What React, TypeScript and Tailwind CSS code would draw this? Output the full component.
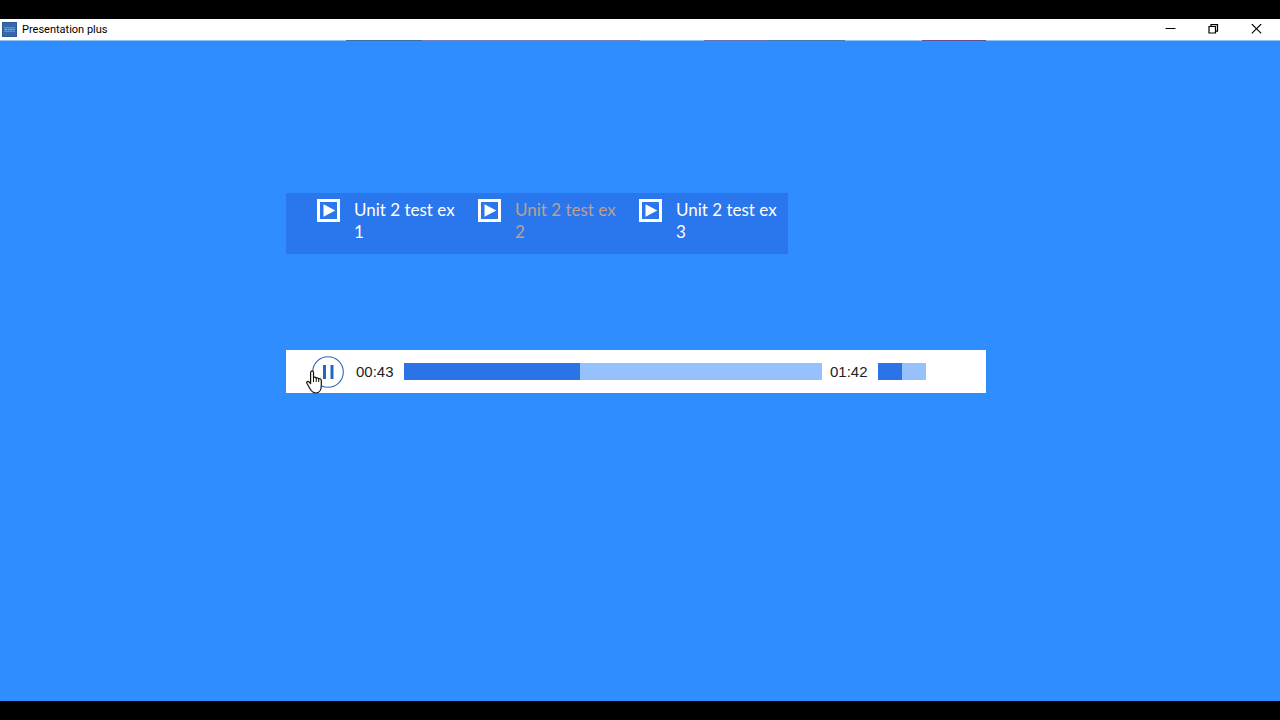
import { useState } from "react";

interface Track {
  id: number;
  name: string;
}

interface BarSliderProps {
  label: string;
  value: number;
  max: number;
  onChange: (value: number) => void;
  className: string;
}

const tracks: Track[] = [
  { id: 1, name: "Unit 2 test ex 1" },
  { id: 2, name: "Unit 2 test ex 2" },
  { id: 3, name: "Unit 2 test ex 3" },
];

const DURATION = 102;

const formatTime = (seconds: number) => {
  const mins = String(Math.floor(seconds / 60)).padStart(2, "0");
  const secs = String(seconds % 60).padStart(2, "0");
  return `${mins}:${secs}`;
};

const TitleBar = () => (
  <header className="flex h-[21px] items-center justify-between bg-white pr-0.5 pl-0.5 text-black">
    <div className="flex items-center gap-[5px]">
      <svg width="15" height="15" viewBox="0 0 15 15" aria-hidden="true">
        <rect width="15" height="15" fill="#3468ab" />
        <rect x="0.5" y="0.5" width="14" height="14" fill="none" stroke="#2c5a9a" />
        <rect x="2" y="5" width="11" height="5" fill="#4179ba" />
        <path d="M2 5.5h11M2 9.5h11" stroke="#6d9dd2" strokeWidth="0.6" />
        <path d="M3 7.5h2M6 7.5h1M8 7.5h2M11 7.5h1.500" stroke="#8db4df" />
      </svg>
      <h1 className="font-[Roboto,sans-serif] text-[11px] leading-4">Presentation plus</h1>
    </div>

    <div className="flex h-full items-center">
      <button type="button" aria-label="Minimize" className="flex h-full w-[43px] items-center justify-center">
        <svg width="11" height="11" viewBox="0 0 11 11" fill="none" stroke="currentColor">
          <path d="M0.500 4.500h10" />
        </svg>
      </button>
      <button type="button" aria-label="Restore" className="flex h-full w-[43px] items-center justify-center">
        <svg width="11" height="11" viewBox="0 0 11 11" fill="none" stroke="currentColor" strokeWidth="1.2">
          <path d="M1 2.500h6.500v6.500h-6.500zM3 2.500V0.600h6.500v6.500H7.500" />
        </svg>
      </button>
      <button type="button" aria-label="Close" className="flex h-full w-[43px] items-center justify-center">
        <svg width="11" height="11" viewBox="0 0 11 11" fill="none" stroke="currentColor" strokeWidth="1.1">
          <path d="M0.800 0l9.400 9.400M10.200 0L0.800 9.400" />
        </svg>
      </button>
    </div>
  </header>
);

// Thin multi-coloured edge under the title bar
const TitleEdge = () => (
  <div className="flex h-px bg-[#8fc4f5]" aria-hidden="true">
    <span className="w-[27%]" />
    <span className="w-[6%] bg-[#3a6fb0]" />
    <span className="w-[17%] bg-[#6f82c0]" />
    <span className="w-[5%]" />
    <span className="w-[5%] bg-[#6c6fb4]" />
    <span className="w-[6%] bg-[#4a78b8]" />
    <span className="w-[6%]" />
    <span className="w-[5%] bg-[#6a4f96]" />
  </div>
);

const PlayIcon = () => (
  <svg width="23" height="23" viewBox="0 0 23 23" className="shrink-0" aria-hidden="true">
    <rect x="1.500" y="1.500" width="20" height="20" fill="none" stroke="#fff" strokeWidth="3" />
    <path d="M6.500 5.200L18.300 11.500L6.500 17.800z" fill="#fff" />
  </svg>
);

const PlayerToggle = ({ playing }: { playing: boolean }) => (
  <svg width="32" height="32" viewBox="0 0 32 32" aria-hidden="true">
    <circle cx="16" cy="16" r="15.300" fill="#fff" stroke="#2c67b8" strokeWidth="1.1" />
    {playing ? (
      <path d="M11 9h3v14h-3zM18.500 9h3v14h-3z" fill="#2468bd" />
    ) : (
      <path d="M12 8.500L23 16L12 23.500z" fill="#2468bd" />
    )}
  </svg>
);

const HandPointer = () => (
  <svg
    width="18"
    height="24"
    viewBox="0 0 18 24"
    className="pointer-events-none absolute top-5 left-5"
    aria-hidden="true"
  >
    <path
      d="M4.600 13.500V2.500C4.600 0.400 7.500 0.400 7.500 2.500V8C7.500 6.600 10.200 6.700 10.200 8.500C10.200 7.400 12.700 7.500 12.700 9.300C12.700 8.300 15.300 8.500 15.300 10.500V15.500C15.300 19.500 13.500 23 9.800 23C6.300 23 4.800 20.500 3.300 17.500L0.900 13.300C0.200 11.500 2 10.800 3.100 12z"
      fill="#fff"
      stroke="#111"
      strokeWidth="1.2"
      strokeLinejoin="round"
    />
    <path d="M7.500 7.500V12M10.200 8.500V12M12.700 9.500V12" stroke="#111" fill="none" />
  </svg>
);

const BarSlider = ({ label, value, max, onChange, className }: BarSliderProps) => {
  const percent = (value / max) * 100;

  return (
    <input
      type="range"
      aria-label={label}
      min={0}
      max={max}
      value={value}
      onChange={(e) => onChange(Number(e.target.value))}
      className={`h-[17px] cursor-pointer appearance-none [&::-webkit-slider-thumb]:h-4 [&::-webkit-slider-thumb]:w-0 [&::-webkit-slider-thumb]:appearance-none ${className}`}
      style={{
        background: `linear-gradient(to right, #2a74e8 ${percent}%, #96c1fa ${percent}%)`,
      }}
    />
  );
};

const App = () => {
  const [currentId, setCurrentId] = useState(2);
  const [playing, setPlaying] = useState(true);
  const [time, setTime] = useState(43);
  const [volume, setVolume] = useState(50);

  const handleSelect = (id: number) => {
    setCurrentId(id);
    setTime(0);
    setPlaying(true);
  };

  return (
    <div className="flex min-h-screen flex-col bg-black pt-[19px] pb-[19px]">
      <TitleBar />
      <TitleEdge />

      <main className="flex flex-1 flex-col items-center bg-[#2f8dff] pt-[152px] pr-2">
        <div className="w-full max-w-[700px]">
          <ul className="grid max-w-[502px] grid-cols-3 gap-x-5 bg-[#2a76ec] pt-1.5 pr-2 pb-[11px] pl-[31px] font-[Lato,sans-serif] text-[17px] leading-[22px]">
            {tracks.map((track) => (
              <li key={track.id}>
                <button
                  type="button"
                  onClick={() => handleSelect(track.id)}
                  className={`flex items-start gap-3.5 text-left ${
                    track.id === currentId ? "text-[#bda093]" : "text-white"
                  }`}
                >
                  <PlayIcon />
                  <span>{track.name}</span>
                </button>
              </li>
            ))}
          </ul>

          <section
            aria-label="Audio player"
            className="relative mt-24 flex h-[43px] items-center bg-white pr-[60px] pl-[26px] font-['Liberation_Sans',sans-serif] text-[15px] leading-6 text-[#222]"
          >
            <button
              type="button"
              aria-label={playing ? "Pause" : "Play"}
              onClick={() => setPlaying(!playing)}
              className="shrink-0 cursor-pointer"
            >
              <PlayerToggle playing={playing} />
            </button>
            <span className="w-15 pl-3">{formatTime(time)}</span>
            <BarSlider label="Seek" value={time} max={DURATION} onChange={setTime} className="min-w-0 flex-1" />
            <span className="w-14 pl-2">{formatTime(DURATION)}</span>
            <BarSlider label="Volume" value={volume} max={100} onChange={setVolume} className="w-12" />
            <HandPointer />
          </section>
        </div>
      </main>
    </div>
  );
};

export default App;
